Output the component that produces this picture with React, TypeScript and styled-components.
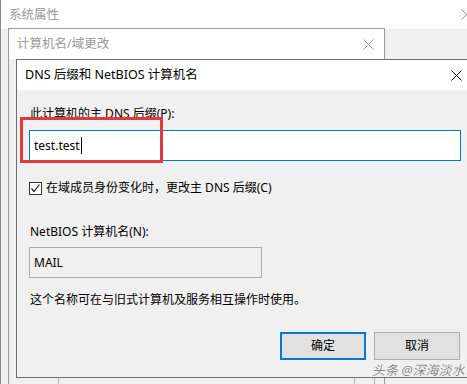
import React from "react";
import styled, { createGlobalStyle } from "styled-components";

const Global = createGlobalStyle`
  html, body { margin: 0; padding: 0; background: #f0f0f0; }
  body { font-family: "Noto Sans", "Noto Sans CJK SC", sans-serif; font-size: 12px; color: #000; }
`;

const Desktop = styled.div`
  position: relative;
  width: 467px;
  height: 384px;
  overflow: hidden;
  background: #f0f0f0;
`;

const Win = styled.div<{ $left: number; $top: number; $width: number; $height: number; $border: string }>`
  position: absolute;
  left: ${(p) => p.$left}px;
  top: ${(p) => p.$top}px;
  width: ${(p) => p.$width}px;
  height: ${(p) => p.$height}px;
  box-sizing: border-box;
  border: 1px solid ${(p) => p.$border};
  background: #f0f0f0;
  display: flex;
  flex-direction: column;
`;

const TitleBar = styled.div<{ $height: number; $padRight: number }>`
  height: ${(p) => p.$height}px;
  flex: none;
  background: #fff;
  display: flex;
  align-items: center;
  justify-content: space-between;
  padding: 0 ${(p) => p.$padRight}px 0 8px;
`;

const TitleText = styled.span<{ $inactive?: boolean }>`
  font-size: 12.5px;
  line-height: 16px;
  color: ${(p) => (p.$inactive ? "#9a9a9a" : "#000")};
`;

const CloseBtn = ({ color }: { color: string }) => (
  <svg width="11" height="11" viewBox="0 0 11 11">
    <path d="M0.5 0.5 L10.5 10.5 M10.5 0.5 L0.5 10.5" stroke={color} strokeWidth="1" fill="none" />
  </svg>
);

const Strip = styled.div`
  display: flex;
  margin-top: 318px;
  height: 20px;
`;

const StripCell = styled.div<{ $w: number }>`
  width: ${(p) => p.$w}px;
  flex: none;
  border-right: 1px solid #b4b4b4;
`;

const Body = styled.div`
  position: relative;
  flex: 1;
  display: flex;
  flex-direction: column;
  padding: 16px 11px 0 12px;
`;

const Label = styled.div<{ $mt?: number }>`
  line-height: 16px;
  margin-top: ${(p) => p.$mt ?? 0}px;
  padding-left: 1px;
  white-space: nowrap;
`;

const Field = styled.div<{ $focused?: boolean; $width?: number }>`
  box-sizing: border-box;
  height: 31px;
  width: ${(p) => (p.$width ? `${p.$width}px` : "100%")};
  border: 1px solid ${(p) => (p.$focused ? "#0078d7" : "#adadad")};
  background: ${(p) => (p.$focused ? "#fff" : "#f0f0f0")};
  display: flex;
  align-items: center;
  padding-left: 4px;
  line-height: 16px;
  flex: none;
`;

const Caret = styled.span`
  display: inline-block;
  width: 1px;
  height: 17px;
  background: #000;
  margin-left: 1px;
`;

const CheckRow = styled.div`
  display: flex;
  align-items: center;
  gap: 4px;
  margin-top: 19px;
  line-height: 16px;
  white-space: nowrap;
`;

const Box = styled.span`
  width: 13px;
  height: 13px;
  box-sizing: border-box;
  border: 1px solid #333;
  background: #fff;
  display: inline-flex;
  align-items: center;
  justify-content: center;
`;

const Buttons = styled.div`
  display: flex;
  justify-content: flex-end;
  gap: 8px;
  margin-top: 24px;
  padding-right: 1px;
`;

const Button = styled.div<{ $primary?: boolean }>`
  box-sizing: border-box;
  width: 86px;
  height: 28px;
  background: #e1e1e1;
  border: ${(p) => (p.$primary ? "2px solid #0078d7" : "1px solid #adadad")};
  display: flex;
  align-items: center;
  justify-content: center;
  line-height: 16px;
`;

const Highlight = styled.div`
  position: absolute;
  left: 3px;
  top: 27px;
  width: 143px;
  height: 46px;
  box-sizing: border-box;
  border: 3px solid #e0393e;
  pointer-events: none;
`;

const Watermark = styled.div`
  position: absolute;
  left: 372px;
  top: 362px;
  font-size: 13px;
  line-height: 16px;
  font-style: italic;
  color: #8a8a8a;
  text-shadow: 0 0 1px #fff, 0 0 1px #fff;
  white-space: nowrap;
`;

export default function App() {
  return (
    <>
      <Global />
      <Desktop>
        <Win $left={0} $top={-1} $width={480} $height={400} $border="#8a8a8a">
          <TitleBar $height={29} $padRight={7}>
            <TitleText $inactive>系统属性</TitleText>
            <CloseBtn color="#9a9a9a" />
          </TitleBar>
        </Win>
        <Win $left={8} $top={28} $width={377} $height={380} $border="#9a9a9a">
          <TitleBar $height={30} $padRight={10}>
            <TitleText $inactive>计算机名/域更改</TitleText>
            <CloseBtn color="#9a9a9a" />
          </TitleBar>
          <Strip>
            <StripCell $w={49} />
            <StripCell $w={295} />
            <StripCell $w={19} />
          </Strip>
        </Win>
        <Win $left={16} $top={59} $width={457} $height={319} $border="#6e6e6e">
          <TitleBar $height={30} $padRight={10}>
            <TitleText>DNS 后缀和 NetBIOS 计算机名</TitleText>
            <CloseBtn color="#000" />
          </TitleBar>
          <Body>
            <Label>此计算机的主 DNS 后缀(P):</Label>
            <Field $focused style={{ marginTop: 8 }}>
              test.test
              <Caret />
            </Field>
            <CheckRow>
              <Box>
                <svg width="11" height="11" viewBox="0 0 11 11">
                  <path d="M1.5 5.5 L4 8.5 L9.5 1.5" stroke="#222" strokeWidth="1.2" fill="none" />
                </svg>
              </Box>
              在域成员身份变化时，更改主 DNS 后缀(C)
            </CheckRow>
            <Label $mt={28}>NetBIOS 计算机名(N):</Label>
            <Field $width={233} style={{ marginTop: 7 }}>MAIL</Field>
            <Label $mt={14}>这个名称可在与旧式计算机及服务相互操作时使用。</Label>
            <Buttons>
              <Button $primary>确定</Button>
              <Button>取消</Button>
            </Buttons>
            <Highlight />
          </Body>
        </Win>
        <Watermark>头条 @深海淡水</Watermark>
      </Desktop>
    </>
  );
}
